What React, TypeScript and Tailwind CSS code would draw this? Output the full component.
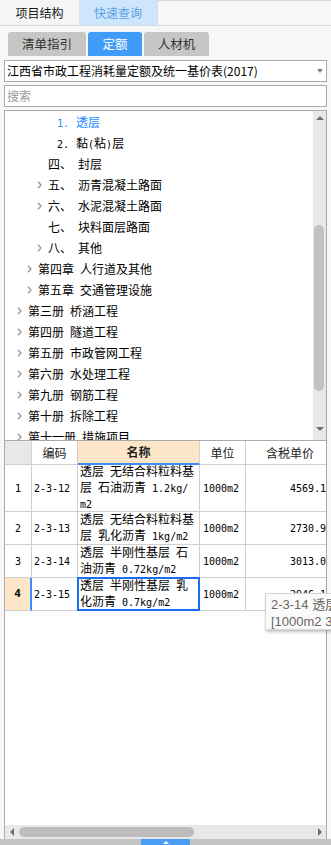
import React from "react";

function Txt({ s }: { s: string }) {
  const parts = s.match(/[\x20-\x7e]+|[^\x20-\x7e]+/g) || [];
  return (
    <>
      {parts.map((p, i) =>
        /[\x20-\x7e]/.test(p[0]) ? (
          <span key={i} className="font-['DejaVu_Sans_Mono',monospace] text-[10px] whitespace-pre">
            {p}
          </span>
        ) : (
          <span key={i}>{p}</span>
        )
      )}
    </>
  );
}

const Chev = () => (
  <svg width="5" height="8" viewBox="0 0 5 8" className="ml-[1px]">
    <path d="M1 0.8 L4 4 L1 7.2" fill="none" stroke="#9c9c9c" strokeWidth="1.4" />
  </svg>
);

type TRow = { pl: number; arrow?: boolean; label: string; text: string; blue?: boolean; gap: number };

const treeRows: TRow[] = [
  { pl: 40, label: "1.", text: "透层", blue: true, gap: 7 },
  { pl: 40, label: "2.", text: "黏(粘)层", gap: 7 },
  { pl: 31, label: "四、", text: "封层", gap: 6 },
  { pl: 31, arrow: true, label: "五、", text: "沥青混凝土路面", gap: 6 },
  { pl: 31, arrow: true, label: "六、", text: "水泥混凝土路面", gap: 6 },
  { pl: 31, label: "七、", text: "块料面层路面", gap: 6 },
  { pl: 31, arrow: true, label: "八、", text: "其他", gap: 6 },
  { pl: 21, arrow: true, label: "第四章", text: "人行道及其他", gap: 6 },
  { pl: 21, arrow: true, label: "第五章", text: "交通管理设施", gap: 6 },
  { pl: 11, arrow: true, label: "第三册", text: "桥涵工程", gap: 6 },
  { pl: 11, arrow: true, label: "第四册", text: "隧道工程", gap: 6 },
  { pl: 11, arrow: true, label: "第五册", text: "市政管网工程", gap: 6 },
  { pl: 11, arrow: true, label: "第六册", text: "水处理工程", gap: 6 },
  { pl: 11, arrow: true, label: "第九册", text: "钢筋工程", gap: 6 },
  { pl: 11, arrow: true, label: "第十册", text: "拆除工程", gap: 6 },
  { pl: 11, arrow: true, label: "第十一册", text: "措施项目", gap: 6 },
];

type DRow = { n: string; code: string; name: string[]; unit: string; price: string; h: number; sel?: boolean };

const dataRows: DRow[] = [
  { n: "1", code: "2-3-12", name: ["透层 无结合料粒料基", "层 石油沥青 1.2kg/", "m2"], unit: "1000m2", price: "4569.1", h: 47 },
  { n: "2", code: "2-3-13", name: ["透层 无结合料粒料基", "层 乳化沥青 1kg/m2"], unit: "1000m2", price: "2730.9", h: 33 },
  { n: "3", code: "2-3-14", name: ["透层 半刚性基层 石", "油沥青 0.72kg/m2"], unit: "1000m2", price: "3013.0", h: 33 },
  { n: "4", code: "2-3-15", name: ["透层 半刚性基层 乳", "化沥青 0.7kg/m2"], unit: "1000m2", price: "2946.1", h: 33, sel: true },
];

export default function App() {
  return (
    <div className="w-[331px] h-[845px] overflow-hidden relative flex flex-col bg-[#f7f7f7] font-['Noto_Sans_CJK_SC',sans-serif] text-[12px] text-black">
      {/* top tabs */}
      <div className="h-[26px] shrink-0 flex border-b border-[#d9d9d9]">
        <div className="w-[79px] flex items-center justify-center bg-[#f5f5f5] text-[#1a1a1a]">项目结构</div>
        <div className="w-[78px] flex items-center justify-center bg-[#cde6fc] text-[#5b9ee6]">快速查询</div>
        <div className="flex-1 border-l border-t border-[#d9d9d9] bg-[#f7f7f7]" />
      </div>

      {/* sub tabs */}
      <div className="h-[30px] shrink-0 flex items-end pl-[8px] gap-[2px]">
        <div className="w-[78px] h-[24px] rounded-t-[3px] bg-[#c6c6c6] text-[#333] flex items-center justify-center text-[12.5px]">清单指引</div>
        <div className="w-[54px] h-[24px] rounded-t-[3px] bg-[#3f9cf8] text-white flex items-center justify-center text-[12.5px]">定额</div>
        <div className="w-[65px] h-[24px] rounded-t-[3px] bg-[#c6c6c6] text-[#333] flex items-center justify-center text-[12.5px]">人材机</div>
      </div>

      {/* dropdown */}
      <div className="mt-[4px] mx-[4px] h-[22px] shrink-0 border border-[#ababab] bg-white flex items-center pl-[2px] pr-[3px]">
        <span className="flex-1 whitespace-nowrap">江西省市政工程消耗量定额及统一基价表(2017)</span>
        <svg width="6" height="4" viewBox="0 0 6 4">
          <path d="M0 0 H6 L3 4 Z" fill="#808080" />
        </svg>
      </div>

      {/* search */}
      <div className="mt-[3px] mx-[4px] h-[22px] shrink-0 border border-[#ababab] bg-white flex items-center pl-[2px]">
        <span className="text-[#9a9a9a]">搜索</span>
      </div>

      {/* tree */}
      <div className="mt-[3px] mx-[4px] h-[330px] shrink-0 border-x border-t border-[#ababab] bg-white flex overflow-hidden">
        <div className="flex-1 flex flex-col overflow-hidden">
          {treeRows.map((r, i) => (
            <div key={i} className="h-[21px] shrink-0 flex items-center whitespace-nowrap" style={{ paddingLeft: r.pl }}>
              <div className="w-[12px] flex items-center">{r.arrow ? <Chev /> : null}</div>
              <span className={r.blue ? "text-[#1a8cff]" : ""} style={{ marginRight: r.gap }}>
                <Txt s={r.label} />
              </span>
              <span className={r.blue ? "text-[#1a8cff]" : ""}>
                <Txt s={r.text} />
              </span>
            </div>
          ))}
        </div>
        <div className="w-[13px] shrink-0 bg-[#e8e8e8] flex flex-col">
          <div className="h-[13px] flex items-center justify-center">
            <svg width="8" height="4" viewBox="0 0 8 4">
              <path d="M0 4 L4 0 L8 4 Z" fill="#6e6e6e" />
            </svg>
          </div>
          <div className="flex-1">
            <div className="mt-[101px] ml-[1px] w-[10px] h-[166px] rounded-full bg-[#c2c2c2]" />
          </div>
          <div className="h-[16px] flex items-start justify-center pt-[3px]">
            <svg width="8" height="4" viewBox="0 0 8 4">
              <path d="M0 0 L8 0 L4 4 Z" fill="#6e6e6e" />
            </svg>
          </div>
        </div>
      </div>

      {/* table */}
      <div className="mx-[4px] h-[399px] shrink-0 border-x border-t border-[#ababab] bg-white flex flex-col">
        <div className="flex h-[24px] shrink-0 text-[#222]">
          <div className="w-[27px] bg-[#e8e8e8] border-r border-b border-[#d0d0d0]" />
          <div className="w-[46px] border-r border-b border-[#d0d0d0] flex items-center justify-center">编码</div>
          <div className="w-[122px] bg-[#fde6c8] border-r border-[#d0d0d0] border-b-2 border-b-[#3d8ef8] flex items-center justify-center font-bold">名称</div>
          <div className="w-[46px] border-r border-b border-[#d0d0d0] flex items-center justify-center">单位</div>
          <div className="flex-1 border-b border-[#d0d0d0] flex items-center justify-center pl-[8px]">含税单价</div>
        </div>
        {dataRows.map((r) => (
          <div key={r.n} className="flex shrink-0" style={{ height: r.h }}>
            <div
              className={
                r.sel
                  ? "w-[27px] bg-[#fde6c8] border-r-2 border-r-[#3d8ef8] border-b border-b-[#d0d0d0] flex items-center justify-center font-bold"
                  : "w-[27px] border-r border-b border-[#d0d0d0] flex items-center justify-center"
              }
            >
              <span className={r.sel ? "font-['DejaVu_Sans_Mono',monospace] text-[11px] font-bold" : "font-['DejaVu_Sans_Mono',monospace] text-[10px]"}>{r.n}</span>
            </div>
            <div className="w-[46px] border-r border-b border-[#d0d0d0] flex items-center pl-[2px]">
              <Txt s={r.code} />
            </div>
            <div className="w-[122px] border-r border-b border-[#d0d0d0] flex flex-col justify-center pl-[2px] leading-[14px] relative">
              {r.name.map((l, j) => (
                <div key={j} className="whitespace-nowrap">
                  <Txt s={l} />
                </div>
              ))}
              {r.sel ? <div className="absolute left-[-1px] top-[-1px] right-[-1px] bottom-[-1px] border-2 border-[#1a6ff0]" /> : null}
            </div>
            <div className="w-[46px] border-r border-b border-[#d0d0d0] flex items-center pl-[3px]">
              <Txt s={r.unit} />
            </div>
            <div className="flex-1 border-b border-[#d0d0d0] flex items-center justify-end overflow-hidden">
              <Txt s={r.price} />
            </div>
          </div>
        ))}
        <div className="flex-1" />
        <div className="h-[14px] shrink-0 bg-[#e8e8e8] flex items-center">
          <div className="w-[14px] flex items-center justify-center">
            <svg width="4" height="8" viewBox="0 0 4 8">
              <path d="M4 0 L4 8 L0 4 Z" fill="#6e6e6e" />
            </svg>
          </div>
          <div className="w-[175px] h-[10px] rounded-full bg-[#bdbdbd]" />
          <div className="flex-1" />
          <div className="w-[13px] flex items-center justify-center">
            <svg width="4" height="8" viewBox="0 0 4 8">
              <path d="M0 0 L0 8 L4 4 Z" fill="#6e6e6e" />
            </svg>
          </div>
        </div>
      </div>

      {/* bottom strip */}
      <div className="h-[6px] shrink-0 bg-[#c4c4c4] flex">
        <div className="ml-[141px] w-[49px] h-full bg-[#4a9ef5] flex items-center justify-center">
          <svg width="6" height="3" viewBox="0 0 6 3">
            <path d="M0 3 L3 0 L6 3 Z" fill="#ffffff" />
          </svg>
        </div>
      </div>

      {/* tooltip */}
      <div className="absolute left-[265px] top-[593px] h-[37px] w-[200px] bg-[#fafafa] border border-[#d6d6d6] shadow-[1px_2px_3px_rgba(0,0,0,0.25)] pl-[5px] pt-[2px] text-[13px] leading-[17px] text-[#6b6661] font-['Liberation_Sans','Noto_Sans_CJK_SC',sans-serif] whitespace-nowrap">
        <div>2-3-14 透层 半刚性基层 石油沥青 0.72kg/m2</div>
        <div>[1000m2 3013.04元]</div>
      </div>
    </div>
  );
}
